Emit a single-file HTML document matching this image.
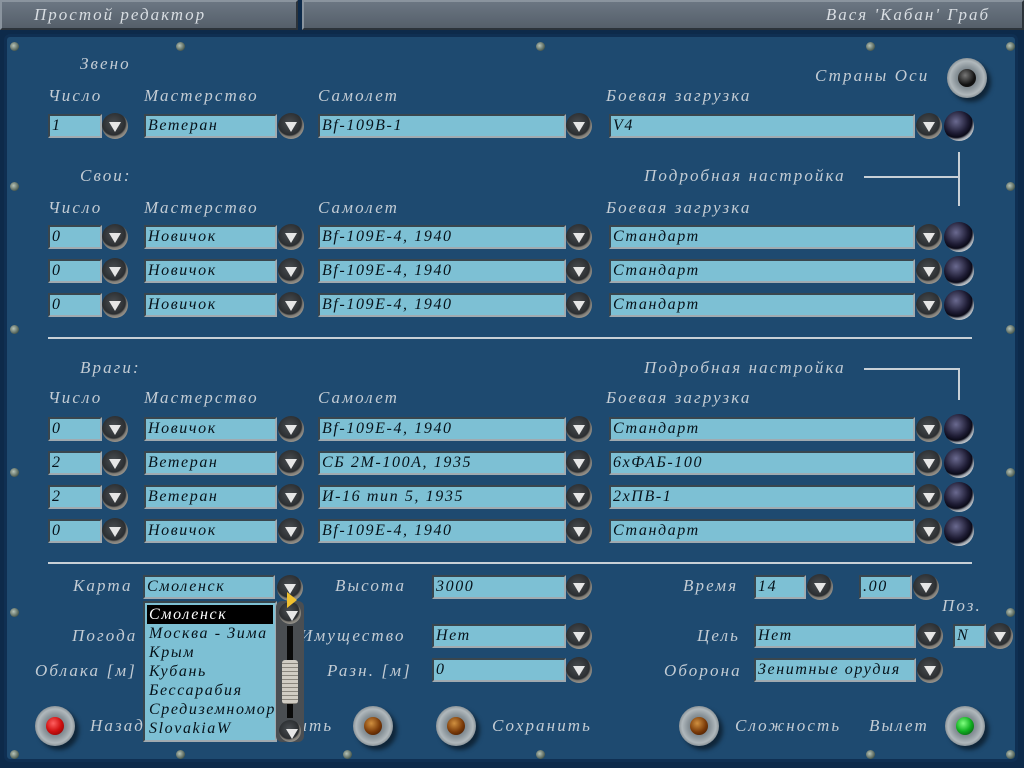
<!DOCTYPE html>
<html><head><meta charset="utf-8"><style>
body{margin:0;width:1024px;height:768px;overflow:hidden;background:#0d2a4a;position:relative;font-family:"Liberation Serif",serif;}
.top{position:absolute;top:0;height:30px;background:linear-gradient(#6b7682,#555f6a);border:2px solid;border-color:#8a949e #2c333a #2c333a #8a949e;box-sizing:border-box;color:#d8dde2;font:italic 17px "Liberation Serif",serif;line-height:26px;letter-spacing:2px;}
.panel{position:absolute;left:4px;top:34px;width:1014px;height:728px;background:#1e4a70;border:3px solid #0f2f52;box-sizing:border-box;border-radius:6px;}
.l{position:absolute;color:#c3ccd4;font:italic 17px "Liberation Serif",serif;white-space:nowrap;letter-spacing:2.1px;}
.f{position:absolute;height:24px;box-sizing:border-box;background:#7dc0d4;border:2px solid;border-color:#39464e #a0aab0 #a0aab0 #39464e;color:#06121a;font:italic 16px "Liberation Serif",serif;line-height:20px;padding-left:2px;white-space:nowrap;overflow:hidden;letter-spacing:1.6px;}
.b{position:absolute;width:26px;height:26px;border-radius:50%;background:radial-gradient(circle at 45% 40%,#4a4e52 0,#2b2e31 55%,#7d7a74 62%,#9a968e 75%,#55524c 100%);}
.b:after{content:"";position:absolute;left:7px;top:9px;border-left:6px solid transparent;border-right:6px solid transparent;border-top:10px solid #e6e6e6;}
.k{position:absolute;width:30px;height:30px;border-radius:50%;background:radial-gradient(circle at 40% 35%,#6a6a90 0,#1e1c34 45%,#0a0a18 60%,#9aa0a8 68%,#d0d4d8 78%,#5a5e64 100%);}
.s{position:absolute;width:9px;height:9px;border-radius:50%;background:radial-gradient(circle at 40% 40%,#b8c4b8,#4a5a50 70%,#1a2a22);}
.hl{position:absolute;height:2px;background:#c8d0d6;}
.vl{position:absolute;width:2px;background:#c8d0d6;}
.big{position:absolute;width:40px;height:40px;border-radius:50%;background:radial-gradient(circle,#505a62 0,#8a949a 40%,#b0b8bc 60%,#2a3238 100%);box-shadow:4px 4px 4px rgba(0,0,0,.5);}
.big i{position:absolute;left:11px;top:11px;width:18px;height:18px;border-radius:50%;}
.dd{letter-spacing:1.6px}
</style></head><body>
<div class="top" style="left:0;width:298px;padding-left:32px">Простой редактор</div>
<div class="top" style="left:302px;width:722px;text-align:right;padding-right:32px">Вася 'Кабан' Граб</div>
<div class="panel"></div>
<div class="s" style="left:10px;top:42px"></div><div class="s" style="left:176px;top:42px"></div><div class="s" style="left:536px;top:42px"></div><div class="s" style="left:866px;top:42px"></div><div class="s" style="left:1006px;top:42px"></div>
<div class="s" style="left:10px;top:182px"></div><div class="s" style="left:10px;top:325px"></div><div class="s" style="left:10px;top:468px"></div><div class="s" style="left:10px;top:608px"></div><div class="s" style="left:10px;top:750px"></div>
<div class="s" style="left:1006px;top:182px"></div><div class="s" style="left:1006px;top:325px"></div><div class="s" style="left:1006px;top:468px"></div><div class="s" style="left:1006px;top:608px"></div><div class="s" style="left:1006px;top:750px"></div>
<div class="s" style="left:176px;top:750px"></div><div class="s" style="left:343px;top:750px"></div><div class="s" style="left:536px;top:750px"></div><div class="s" style="left:866px;top:750px"></div>

<div class="l" style="left:80px;top:54px">Звено</div>
<div class="l" style="left:815px;top:66px">Страны Оси</div>
<div class="big" style="left:947px;top:58px"><i style="background:radial-gradient(circle at 40% 35%,#777,#111 60%)"></i></div>
<div class="l" style="left:48px;top:86px">Число</div><div class="l" style="left:144px;top:86px">Мастерство</div><div class="l" style="left:318px;top:86px">Самолет</div><div class="l" style="left:606px;top:86px">Боевая загрузка</div>
<div class="f" style="left:48px;top:114px;width:54px">1</div><div class="b" style="left:102px;top:113px"></div>
<div class="f" style="left:144px;top:114px;width:133px">Ветеран</div><div class="b" style="left:278px;top:113px"></div>
<div class="f" style="left:318px;top:114px;width:248px">Bf-109B-1</div><div class="b" style="left:566px;top:113px"></div>
<div class="f" style="left:609px;top:114px;width:306px">V4</div><div class="b" style="left:916px;top:113px"></div><div class="k" style="left:944px;top:111px"></div>

<div class="l" style="left:80px;top:166px">Свои:</div>
<div class="l" style="left:644px;top:166px">Подробная настройка</div>
<div class="hl" style="left:864px;top:176px;width:94px"></div><div class="vl" style="left:958px;top:152px;height:54px"></div>
<div class="l" style="left:48px;top:198px">Число</div><div class="l" style="left:144px;top:198px">Мастерство</div><div class="l" style="left:318px;top:198px">Самолет</div><div class="l" style="left:606px;top:198px">Боевая загрузка</div>

<div class="f" style="left:48px;top:225px;width:54px">0</div><div class="b" style="left:102px;top:224px"></div><div class="f" style="left:144px;top:225px;width:133px">Новичок</div><div class="b" style="left:278px;top:224px"></div><div class="f" style="left:318px;top:225px;width:248px">Bf-109E-4, 1940</div><div class="b" style="left:566px;top:224px"></div><div class="f" style="left:609px;top:225px;width:306px">Стандарт</div><div class="b" style="left:916px;top:224px"></div><div class="k" style="left:944px;top:222px"></div>
<div class="f" style="left:48px;top:259px;width:54px">0</div><div class="b" style="left:102px;top:258px"></div><div class="f" style="left:144px;top:259px;width:133px">Новичок</div><div class="b" style="left:278px;top:258px"></div><div class="f" style="left:318px;top:259px;width:248px">Bf-109E-4, 1940</div><div class="b" style="left:566px;top:258px"></div><div class="f" style="left:609px;top:259px;width:306px">Стандарт</div><div class="b" style="left:916px;top:258px"></div><div class="k" style="left:944px;top:256px"></div>
<div class="f" style="left:48px;top:293px;width:54px">0</div><div class="b" style="left:102px;top:292px"></div><div class="f" style="left:144px;top:293px;width:133px">Новичок</div><div class="b" style="left:278px;top:292px"></div><div class="f" style="left:318px;top:293px;width:248px">Bf-109E-4, 1940</div><div class="b" style="left:566px;top:292px"></div><div class="f" style="left:609px;top:293px;width:306px">Стандарт</div><div class="b" style="left:916px;top:292px"></div><div class="k" style="left:944px;top:290px"></div>

<div class="hl" style="left:48px;top:337px;width:924px"></div>

<div class="l" style="left:80px;top:358px">Враги:</div>
<div class="l" style="left:644px;top:358px">Подробная настройка</div>
<div class="hl" style="left:864px;top:368px;width:94px"></div><div class="vl" style="left:958px;top:368px;height:32px"></div>
<div class="l" style="left:48px;top:388px">Число</div><div class="l" style="left:144px;top:388px">Мастерство</div><div class="l" style="left:318px;top:388px">Самолет</div><div class="l" style="left:606px;top:388px">Боевая загрузка</div>

<div class="f" style="left:48px;top:417px;width:54px">0</div><div class="b" style="left:102px;top:416px"></div><div class="f" style="left:144px;top:417px;width:133px">Новичок</div><div class="b" style="left:278px;top:416px"></div><div class="f" style="left:318px;top:417px;width:248px">Bf-109E-4, 1940</div><div class="b" style="left:566px;top:416px"></div><div class="f" style="left:609px;top:417px;width:306px">Стандарт</div><div class="b" style="left:916px;top:416px"></div><div class="k" style="left:944px;top:414px"></div>
<div class="f" style="left:48px;top:451px;width:54px">2</div><div class="b" style="left:102px;top:450px"></div><div class="f" style="left:144px;top:451px;width:133px">Ветеран</div><div class="b" style="left:278px;top:450px"></div><div class="f" style="left:318px;top:451px;width:248px">СБ 2М-100А, 1935</div><div class="b" style="left:566px;top:450px"></div><div class="f" style="left:609px;top:451px;width:306px">6хФАБ-100</div><div class="b" style="left:916px;top:450px"></div><div class="k" style="left:944px;top:448px"></div>
<div class="f" style="left:48px;top:485px;width:54px">2</div><div class="b" style="left:102px;top:484px"></div><div class="f" style="left:144px;top:485px;width:133px">Ветеран</div><div class="b" style="left:278px;top:484px"></div><div class="f" style="left:318px;top:485px;width:248px">И-16 тип 5, 1935</div><div class="b" style="left:566px;top:484px"></div><div class="f" style="left:609px;top:485px;width:306px">2хПВ-1</div><div class="b" style="left:916px;top:484px"></div><div class="k" style="left:944px;top:482px"></div>
<div class="f" style="left:48px;top:519px;width:54px">0</div><div class="b" style="left:102px;top:518px"></div><div class="f" style="left:144px;top:519px;width:133px">Новичок</div><div class="b" style="left:278px;top:518px"></div><div class="f" style="left:318px;top:519px;width:248px">Bf-109E-4, 1940</div><div class="b" style="left:566px;top:518px"></div><div class="f" style="left:609px;top:519px;width:306px">Стандарт</div><div class="b" style="left:916px;top:518px"></div><div class="k" style="left:944px;top:516px"></div>

<div class="hl" style="left:48px;top:562px;width:924px"></div>

<div class="l" style="left:73px;top:576px">Карта</div>
<div class="f" style="left:143px;top:575px;width:132px">Смоленск</div><div class="b" style="left:277px;top:575px"></div>
<div class="l" style="left:335px;top:576px">Высота</div>
<div class="f" style="left:432px;top:575px;width:134px">3000</div><div class="b" style="left:566px;top:574px"></div>
<div class="l" style="left:683px;top:576px">Время</div>
<div class="f" style="left:754px;top:575px;width:52px">14</div><div class="b" style="left:807px;top:574px"></div>
<div class="f" style="left:859px;top:575px;width:53px">.00</div><div class="b" style="left:913px;top:574px"></div>
<div class="l" style="left:942px;top:596px">Поз.</div>

<div class="l" style="left:72px;top:626px">Погода</div>
<div class="l" style="left:300px;top:626px">Имущество</div>
<div class="f" style="left:432px;top:624px;width:134px">Нет</div><div class="b" style="left:566px;top:623px"></div>
<div class="l" style="left:697px;top:626px">Цель</div>
<div class="f" style="left:754px;top:624px;width:162px">Нет</div><div class="b" style="left:917px;top:623px"></div>
<div class="f" style="left:953px;top:624px;width:33px">N</div><div class="b" style="left:987px;top:623px"></div>

<div class="l" style="left:35px;top:661px">Облака [м]</div>
<div class="l" style="left:327px;top:661px">Разн. [м]</div>
<div class="f" style="left:432px;top:658px;width:134px">0</div><div class="b" style="left:566px;top:657px"></div>
<div class="l" style="left:664px;top:661px">Оборона</div>
<div class="f" style="left:754px;top:658px;width:162px">Зенитные орудия</div><div class="b" style="left:917px;top:657px"></div>

<div class="big" style="left:35px;top:706px"><i style="background:radial-gradient(circle at 40% 35%,#ff6060,#d01010 50%,#700 100%)"></i></div>
<div class="l" style="left:90px;top:716px">Назад</div>
<div class="l" style="left:240px;top:716px">Загрузить</div>
<div class="big" style="left:353px;top:706px"><i style="background:radial-gradient(circle at 40% 35%,#d09040,#7a3a08 55%,#301000 100%)"></i></div>
<div class="big" style="left:436px;top:706px"><i style="background:radial-gradient(circle at 40% 35%,#d09040,#7a3a08 55%,#301000 100%)"></i></div>
<div class="l" style="left:492px;top:716px">Сохранить</div>
<div class="big" style="left:679px;top:706px"><i style="background:radial-gradient(circle at 40% 35%,#d09040,#7a3a08 55%,#301000 100%)"></i></div>
<div class="l" style="left:735px;top:716px">Сложность</div>
<div class="l" style="left:869px;top:716px">Вылет</div>
<div class="big" style="left:945px;top:706px"><i style="background:radial-gradient(circle at 40% 35%,#80ff80,#10b020 50%,#064010 100%)"></i></div>

<!-- dropdown list -->
<div style="position:absolute;left:143px;top:601px;width:134px;height:141px;box-sizing:border-box;background:#7dc0d4;border:2px solid;border-color:#39464e #a0aab0 #a0aab0 #39464e;font:italic 16px 'Liberation Serif',serif;line-height:19px;color:#06121a;padding:2px 2px;white-space:nowrap;overflow:hidden;letter-spacing:1.6px">
<div style="background:#000;color:#fff;padding-left:2px">Смоленск</div>
<div style="padding-left:2px">Москва - Зима</div><div style="padding-left:2px">Крым</div><div style="padding-left:2px">Кубань</div><div style="padding-left:2px">Бессарабия</div><div style="padding-left:2px">Средиземноморье</div><div style="padding-left:2px">SlovakiaW</div>
</div>
<div style="position:absolute;left:276px;top:601px;width:28px;height:141px;background:#4a4e52;border-radius:6px"></div>
<div class="b" style="left:279px;top:602px;width:22px;height:22px"></div>
<div style="position:absolute;left:287px;top:626px;width:6px;height:92px;background:#0a0a0a"></div>
<div style="position:absolute;left:282px;top:660px;width:16px;height:44px;background:repeating-linear-gradient(#d0ccc4 0 3px,#8a867e 3px 4px);border-radius:3px"></div>
<div class="b" style="left:279px;top:720px;width:22px;height:22px"></div>
<div style="position:absolute;left:287px;top:592px;border-top:8px solid transparent;border-bottom:8px solid transparent;border-left:10px solid #f0c030"></div>
</body></html>
